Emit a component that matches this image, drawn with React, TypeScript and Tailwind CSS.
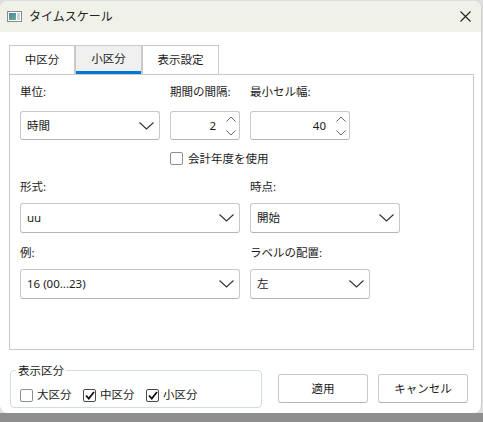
import React from "react";

const font = { fontFamily: '"Noto Sans", "Noto Sans CJK JP", sans-serif' };

function Chevron() {
  return (
    <svg width="15" height="8" viewBox="0 0 15 8" className="shrink-0">
      <polyline points="0.5,0.5 7.5,7 14.5,0.5" fill="none" stroke="#333" strokeWidth="1.1" />
    </svg>
  );
}

function Select({ value, w }: { value: string; w: string }) {
  return (
    <div className={`${w} h-full border border-[#c8c8c8] border-b-[#b5b5b5] rounded-[3px] bg-white flex items-center justify-between pl-[6px] pr-[5px]`}>
      <span className="text-[#1b1b1b]">{value}</span>
      <Chevron />
    </div>
  );
}

function Spinner({ value, w }: { value: string; w: string }) {
  return (
    <div className={`${w} h-full border border-[#c8c8c8] border-b-[#b5b5b5] rounded-[3px] bg-white flex items-center justify-end pr-[3px]`}>
      <span className="text-[#1b1b1b] mr-[10px]">{value}</span>
      <div className="flex flex-col gap-[8px]">
        <svg width="10" height="6" viewBox="0 0 10 6">
          <polyline points="0.5,5.5 5,1 9.5,5.5" fill="none" stroke="#6a6a6a" strokeWidth="1" />
        </svg>
        <svg width="10" height="6" viewBox="0 0 10 6">
          <polyline points="0.5,0.5 5,5 9.5,0.5" fill="none" stroke="#6a6a6a" strokeWidth="1" />
        </svg>
      </div>
    </div>
  );
}

function Check({ checked }: { checked?: boolean }) {
  return (
    <div className={`w-[13px] h-[13px] shrink-0 rounded-[2px] border bg-white flex items-center justify-center ${checked ? "border-[#4a4a4a]" : "border-[#8f8f8f]"}`}>
      {checked && (
        <svg width="10" height="9" viewBox="0 0 10 9">
          <polyline points="1,4.5 3.8,7.5 9,1" fill="none" stroke="#111" strokeWidth="1.8" />
        </svg>
      )}
    </div>
  );
}

function Field({ label, children, w }: { label: string; children: React.ReactNode; w: string }) {
  return (
    <div className={`${w} flex flex-col`}>
      <div className="h-[14px] leading-[14px] text-[#1b1b1b]">{label}</div>
      <div className="mt-[12px] h-[29px]">{children}</div>
    </div>
  );
}

export default function App() {
  return (
    <div className="w-[483px] h-[422px] overflow-hidden bg-[#dedede] text-[11.5px]" style={font}>
      <div className="w-[482px] h-[412px] mt-px rounded-[8px] bg-white overflow-hidden border-r border-[#d0d0d0]">
        {/* Title bar */}
        <div className="h-[31px] bg-[#f0f2e9] flex items-center pl-[7px] pr-[10px]">
          <svg width="15" height="11" viewBox="0 0 15 11">
            <defs>
              <linearGradient id="ig" x1="0" y1="0" x2="1" y2="1">
                <stop offset="0" stopColor="#4a7fb0" />
                <stop offset="1" stopColor="#6fb08a" />
              </linearGradient>
            </defs>
            <rect x="0.5" y="0.5" width="14" height="10" fill="#fff" stroke="#8a8a8a" />
            <rect x="2" y="2" width="7" height="7" fill="url(#ig)" />
            <rect x="10" y="2" width="3" height="7" fill="#c8d6e0" />
          </svg>
          <span className="ml-[7px] text-[12px] text-[#222]">タイムスケール</span>
          <svg width="11" height="11" viewBox="0 0 11 11" className="ml-auto">
            <path d="M0.5 0.5 L10.5 10.5 M10.5 0.5 L0.5 10.5" stroke="#222" strokeWidth="1.1" />
          </svg>
        </div>

        {/* Tabs */}
        <div className="flex ml-[9px] mt-[13px] h-[29px]">
          <div className="w-[66px] border border-b-0 border-[#c9c9c9] flex items-center justify-center text-[#1b1b1b]">中区分</div>
          <div className="w-[67px] border border-b-0 border-[#c9c9c9] bg-[#f0f0f0] flex flex-col">
            <div className="flex-1 flex items-center justify-center text-[#1b1b1b]">小区分</div>
            <div className="h-[3px] bg-[#0078d4]" />
          </div>
          <div className="w-[77px] border border-b-0 border-[#c9c9c9] flex items-center justify-center text-[#1b1b1b]">表示設定</div>
        </div>

        {/* Panel */}
        <div className="ml-[9px] w-[465px] h-[276px] border border-[#c9c9c9] px-[10px] pt-[10px] flex flex-col">
          <div className="flex gap-[10px]">
            <Field label="単位:" w="w-[140px]"><Select value="時間" w="w-full" /></Field>
            <Field label="期間の間隔:" w="w-[70px]"><Spinner value="2" w="w-full" /></Field>
            <Field label="最小セル幅:" w="w-[100px]"><Spinner value="40" w="w-full" /></Field>
          </div>
          <div className="ml-[150px] mt-[12px] flex items-center gap-[5px] h-[13px]">
            <Check />
            <span className="text-[#1b1b1b]">会計年度を使用</span>
          </div>
          <div className="flex gap-[10px] mt-[15px]">
            <div className="w-[220px]">
              <div className="h-[14px] leading-[14px] text-[#1b1b1b]">形式:</div>
              <div className="mt-[9px] h-[30px]"><Select value="uu" w="w-full" /></div>
            </div>
            <div className="w-[150px]">
              <div className="h-[14px] leading-[14px] text-[#1b1b1b]">時点:</div>
              <div className="mt-[9px] h-[30px]"><Select value="開始" w="w-full" /></div>
            </div>
          </div>
          <div className="flex gap-[10px] mt-[13px]">
            <div className="w-[220px]">
              <div className="h-[14px] leading-[14px] text-[#1b1b1b]">例:</div>
              <div className="mt-[9px] h-[30px]"><Select value="16 (00...23)" w="w-full" /></div>
            </div>
            <div className="w-[120px]">
              <div className="h-[14px] leading-[14px] text-[#1b1b1b]">ラベルの配置:</div>
              <div className="mt-[9px] h-[30px]"><Select value="左" w="w-full" /></div>
            </div>
          </div>
        </div>

        {/* Bottom */}
        <div className="flex items-start">
          <div className="relative ml-[10px] mt-[20px] w-[252px] h-[38px] border border-[#d3dce4] rounded-[4px] pl-[9px] pt-[12px] flex items-center">
            <span className="absolute -top-[9px] left-[5px] bg-white px-[2px] text-[#1b1b1b]">表示区分</span>
            <div className="w-[63px] flex items-center gap-[4px]">
              <Check />
              <span className="text-[#1b1b1b]">大区分</span>
            </div>
            <div className="w-[63px] flex items-center gap-[4px]">
              <Check checked />
              <span className="text-[#1b1b1b]">中区分</span>
            </div>
            <div className="flex items-center gap-[4px]">
              <Check checked />
              <span className="text-[#1b1b1b]">小区分</span>
            </div>
          </div>
          <div className="ml-[16px] mt-[24px] flex gap-[10px]">
            <button className="w-[90px] h-[29px] border border-[#c8c8c8] border-b-[#b5b5b5] rounded-[3px] bg-white text-[#1b1b1b]">適用</button>
            <button className="w-[90px] h-[29px] border border-[#c8c8c8] border-b-[#b5b5b5] rounded-[3px] bg-white text-[#1b1b1b]">キャンセル</button>
          </div>
        </div>
      </div>
      {/* shadow strip under the window */}
      <div className="h-[9px] bg-[#8e8e8e]" />
    </div>
  );
}
